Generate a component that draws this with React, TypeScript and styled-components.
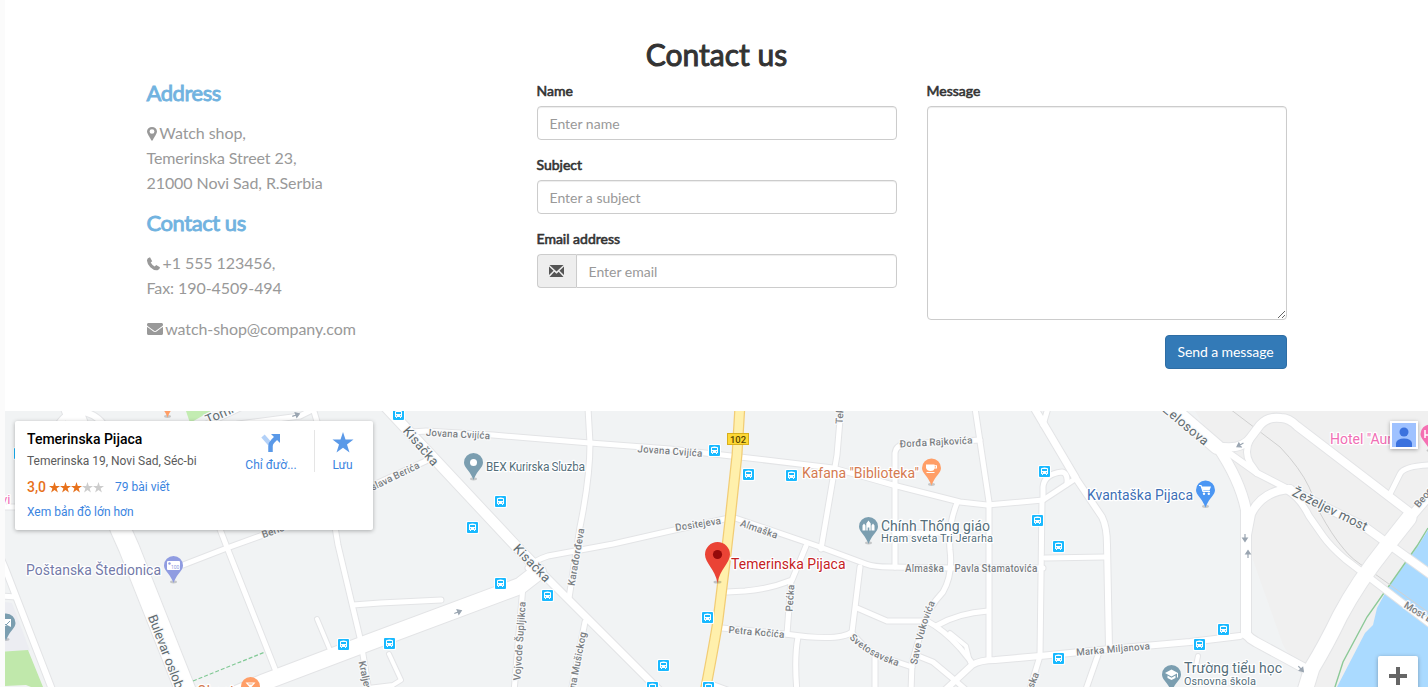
import React from "react";
import styled, { createGlobalStyle } from "styled-components";
import { FaEnvelope } from "react-icons/fa";

const GlobalStyle = createGlobalStyle`
  * { box-sizing: border-box; }
  html, body { margin: 0; padding: 0; }
  body {
    background: #fbfbfb;
    font-family: Lato, "Open Sans", sans-serif;
    font-size: 14px;
    line-height: 20px;
    color: #333;
    overflow: hidden;
  }
`;

const Page = styled.div`
  height: 687px;
  margin-left: 5px;
  background: #fff;
  display: flex;
  flex-direction: column;
  overflow: hidden;
`;

const ContactSection = styled.section`
  height: 411px;
  flex: none;
  padding-top: 38px;
`;

const Container = styled.div`
  width: 1170px;
  margin: 0 auto;
`;

const Title = styled.h2`
  margin: 0 0 10px;
  font-size: 30px;
  line-height: 33px;
  font-weight: 400;
  text-align: center;
  -webkit-text-stroke: 1px #333;
`;

const Columns = styled.div`
  display: grid;
  grid-template-columns: repeat(3, 1fr);
`;

const Column = styled.div`
  padding: 0 15px;
`;

const InfoHeading = styled.h3`
  margin: 0 0 15px;
  font-size: 22px;
  line-height: 24px;
  font-weight: 400;
  letter-spacing: -0.45px;
  color: #71b3e0;
  -webkit-text-stroke: 0.9px #71b3e0;
`;

const InfoText = styled.p<{ $gap?: number }>`
  margin: 0 0 ${(p) => p.$gap ?? 16}px;
  font-size: 16px;
  line-height: 25px;
  letter-spacing: -0.08px;
  color: #999;
  svg { vertical-align: -2px; margin-right: -1px; }
`;

const FormGroup = styled.div`
  display: flex;
  flex-direction: column;
  margin-bottom: 15px;
`;

const Label = styled.label`
  margin-bottom: 5px;
  line-height: 20px;
  -webkit-text-stroke: 0.6px #333;
`;

const Input = styled.input<{ $joined?: boolean }>`
  flex: 1 1 34px;
  min-width: 0;
  height: 34px;
  padding: 6px 12px;
  font: inherit;
  border: 1px solid #ccc;
  border-radius: ${(p) => (p.$joined ? "0 4px 4px 0" : "4px")};
  box-shadow: inset 0 1px 1px rgba(0, 0, 0, 0.075);
  background: #fff;
  outline: none;
  &::placeholder { color: #999; opacity: 1; }
`;

const TextArea = styled.textarea`
  height: 214px;
  padding: 6px 12px;
  font: inherit;
  border: 1px solid #ccc;
  border-radius: 4px;
  box-shadow: inset 0 1px 1px rgba(0, 0, 0, 0.075);
  outline: none;
  resize: vertical;
`;

const InputGroup = styled.div`
  display: flex;
`;

const Addon = styled.span`
  width: 39px;
  height: 34px;
  display: flex;
  align-items: center;
  justify-content: center;
  background: #eee;
  border: 1px solid #ccc;
  border-right: 0;
  border-radius: 4px 0 0 4px;
`;

const ButtonRow = styled.div`
  display: flex;
  justify-content: flex-end;
`;

const SendButton = styled.button`
  width: 122px;
  height: 34px;
  padding: 0;
  font: inherit;
  letter-spacing: -0.08px;
  color: #fff;
  background: #337ab7;
  border: 1px solid #2e6da4;
  border-radius: 4px;
`;

const MapArea = styled.div`
  position: relative;
  height: 276px;
  overflow: hidden;
  font-family: Roboto, sans-serif;
`;

const MapCanvas = styled.svg`
  display: block;
  width: 1423px;
  height: 276px;
  font-family: Roboto, sans-serif;
`;

const PlaceCard = styled.div`
  position: absolute;
  left: 10px;
  top: 10px;
  width: 358px;
  height: 109px;
  padding: 9px 0 0 12px;
  display: flex;
  background: #fff;
  border-radius: 2px;
  box-shadow: 0 1px 4px rgba(0, 0, 0, 0.3);
`;

const PlaceInfo = styled.div`
  width: 207px;
`;

const PlaceName = styled.div`
  font-size: 14px;
  font-weight: 500;
  line-height: 18px;
  color: #000;
`;

const PlaceAddress = styled.div`
  margin-top: 5px;
  font-size: 12px;
  line-height: 16px;
  color: #5b5b5b;
`;

const Rating = styled.div`
  margin-top: 9px;
  height: 18px;
  display: flex;
  align-items: center;
`;

const Score = styled.span`
  font-size: 14px;
  font-weight: 500;
  color: #e7711b;
  margin-right: 3px;
`;

const Stars = styled.span`
  display: flex;
  margin-right: 11px;
`;

const Link = styled.a`
  font-size: 12px;
  line-height: 16px;
  color: #3a84df;
`;

const LinkRow = styled.div`
  margin-top: 8px;
  height: 16px;
  display: flex;
`;

const CardAction = styled.div<{ $width: number }>`
  width: ${(p) => p.$width}px;
  height: 43px;
  padding-top: 2px;
  display: flex;
  flex-direction: column;
  align-items: center;
  gap: 3px;
`;

const CardDivider = styled.div`
  width: 1px;
  height: 42px;
  margin-left: 6px;
  background: #e5e5e5;
`;

const AccountButton = styled.div`
  position: absolute;
  left: 1385px;
  top: 10px;
  width: 28px;
  height: 28px;
  padding: 2px;
  background: #fff;
  box-shadow: 0 1px 4px rgba(0, 0, 0, 0.3);
  svg { display: block; }
`;

const ZoomButton = styled.div`
  position: absolute;
  left: 1373px;
  top: 245px;
  width: 40px;
  height: 40px;
  background: #fff;
  border-radius: 2px;
  box-shadow: 0 1px 4px rgba(0, 0, 0, 0.3);
  display: flex;
  align-items: center;
  justify-content: center;
`;

/* ---- map data ---- */

const ROADS: [number, string][] = [
  [20, "M70 405L121 530L129 548L187 694"],
  [6, "M58 425Q68 410 80 412Q94 412 104 425"],
  [6, "M-2 552L5 568L53 692"],
  [5, "M2 596L16 597"],
  [5, "M2 507L20 507"],
  [5, "M183 565L227 548L285 527L365 489L428 460"],
  [5, "M218 524L228 550L277 674"],
  [5, "M313 408L318 425L338 545L361 642L369 692"],
  [5, "M353 605L380 603L441 600"],
  [4, "M317 619L330 650"],
  [4, "M389 654L401 680L393 685L368 688"],
  [5, "M238 424L300 416L314 409"],
  [5, "M198 428L240 408"],
  [16, "M236 694L262 683L370 642L520 586L538 572"],
  [5, "M528 568Q535 560 548 556L613 544L670 531L729 518"],
  [10, "M384 405L515 545L540 571"],
  [7, "M538 569L662 693"],
  [5, "M412 432L426 431L493 435L590 443L670 449L740 457L833 468L893 485L960 502L987 505L1043 500L1075 479"],
  [5, "M588 408L590 443Q590 478 580 527L569 598"],
  [5, "M585 622L571 692"],
  [5, "M523 586L514 692"],
  [5, "M841 408L837 455L821 549"],
  [5, "M735 518L820 547L866 564Q874 567 890 567L950 568L1043 568"],
  [5, "M806 546L792 580Q770 589 745 591L727 592"],
  [5, "M791 581L787 634"],
  [5, "M722 628L785 634Q840 642 852 632L860 567"],
  [5, "M852 633Q866 650 876 655L912 667"],
  [5, "M798 637Q794 658 797 692"],
  [5, "M875 656L875 692"],
  [5, "M857 608L887 621L927 621Q944 630 960 648L973 664"],
  [5, "M936 626Q958 613 988 611"],
  [5, "M957 503Q948 525 950 550Q953 575 943 592Q928 608 923 625L912 663L911 692"],
  [5, "M918 656L933 662L957 682L966 690"],
  [4, "M950 633L966 646L970 662"],
  [6, "M943 692L972 665Q980 660 995 660L1040 656L1110 649L1190 642L1240 636"],
  [5, "M975 408L989 502L989 660"],
  [5, "M1042 500L1040 656L1029 692"],
  [5, "M1043 500L1043 487Q1044 474 1062 472Q1068 473 1067 484"],
  [7, "M1033 406L1075 477"],
  [6, "M1073 474L1102 517Q1107 527 1107 545L1109 648"],
  [5, "M1048 408L1043 425"],
  [5, "M1045 558L1105 557"],
  [5, "M1099 652L1085 692"],
  [5, "M895 567L895 453Q896 445 906 444L980 440"],
  [5, "M895 533L950 533"],
  [4, "M710 683L734 692"],
  [14, "M1160 398L1217 447"],
  [10, "M1217 446Q1240 480 1246 510L1246 634"],
  [6, "M1222 448L1257 473L1290 490"],
  [8, "M1289 489L1365 527L1434 577"],
  [8, "M1217 446Q1242 451 1251 437L1260 425Q1268 416 1281 418Q1289 418 1297 426L1412 514"],
  [6, "M1250 440Q1244 452 1250 463L1257 473"],
  [8, "M1290 489Q1262 491 1251 514L1247 535"],
  [6, "M1288 491Q1300 498 1309 516L1323 536Q1330 546 1345 559L1434 627"],
  [5, "M1390 494L1400 474Q1404 466 1430 465"],
  [9, "M1432 492L1409 519"],
  [15, "M1409 518L1386 547Q1358 582 1340 616Q1326 645 1312 668L1304 694"],
  [9, "M1246 634Q1250 639 1256 642L1304 668"],
  [4, "M1198 656L1195 670"],
];

const YELLOW = "M740 405L737 455L730 520L726 555L718 620Q715 640 705 692";

const BUS_STOPS: [number, number][] = [
  [398, 414], [500, 501], [472, 527], [500, 583], [547, 595], [389, 643], [343, 644],
  [663, 665], [652, 687], [714, 450], [748, 474], [791, 475], [707, 617], [708, 687],
  [1044, 471], [1037, 520], [1058, 546], [1058, 658], [1223, 629], [1199, 644], [19, 453],
];

type StreetLabel = { t: string; x: number; y: number; r?: number; len?: number; size?: number; start?: boolean };

const STREETS: StreetLabel[] = [
  { t: "Jovana Cvijića", x: 458, y: 434, r: 3, len: 64 },
  { t: "Jovana Cvijića", x: 670, y: 451, r: 4, len: 65 },
  { t: "Kisačka", x: 421, y: 446, r: 49, len: 47, size: 13 },
  { t: "Kisačka", x: 532, y: 563, r: 46, len: 47, size: 13 },
  { t: "slava Berića", x: 395, y: 476, r: -26, len: 53 },
  { t: "Karađorđeva", x: 576, y: 557, r: -80, len: 58 },
  { t: "Vojvode Šupljikca", x: 519.5, y: 641, r: -86, len: 79 },
  { t: "na Mušickog", x: 577.5, y: 660, r: -79, len: 57 },
  { t: "Dositejeva", x: 698, y: 524, r: -9, len: 46 },
  { t: "Almaška", x: 759, y: 529, r: 19, len: 39 },
  { t: "Pećka", x: 790, y: 598, r: -86, len: 27 },
  { t: "Petra Kočića", x: 756.5, y: 632, r: 5, len: 56 },
  { t: "Almaška", x: 924.5, y: 568, len: 39 },
  { t: "Pavla Stamatovića", x: 996, y: 568, len: 83 },
  { t: "Marka Miljanova", x: 1113, y: 649, r: -5, len: 74 },
  { t: "Kraljev", x: 362, y: 661, r: 78, start: true },
  { t: "Bulevar oslob", x: 152, y: 615, r: 69, size: 13, start: true },
  { t: "ska", x: 1033, y: 680, r: -68 },
  { t: "Zelosova", x: 1186, y: 425, r: 40, len: 55, size: 13 },
  { t: "Žeželjev most", x: 1330, y: 509, r: 26, len: 82, size: 13 },
  { t: "Most B", x: 1405, y: 604, r: 31, start: true },
  { t: "Beog", x: 1416, y: 506, r: -50, start: true },
  { t: "Đorđa Rajkovića", x: 936, y: 442, r: -3, len: 73 },
  { t: "Tek", x: 839, y: 424, r: -86, start: true },
  { t: "Tomi", x: 206, y: 420, r: -24, size: 13, start: true },
  { t: "Berića", x: 262, y: 535, r: -20, start: true },
];

type PlaceLabel = { t: string; x: number; y: number; len?: number; size?: number; c: string };

const PLACES: PlaceLabel[] = [
  { t: "BEX Kurirska Sluzba", x: 486, y: 471, len: 99, size: 12, c: "#546e7a" },
  { t: "Kafana \"Biblioteka\"", x: 802, y: 478, len: 117, c: "#d47a50" },
  { t: "Chính Thống giáo", x: 881, y: 531, len: 109, c: "#546e7a" },
  { t: "Hram sveta Tri Jerarha", x: 881, y: 541.5, len: 112, size: 11, c: "#546e7a" },
  { t: "Kvantaška Pijaca", x: 1087, y: 500, len: 106, c: "#3d6fb6" },
  { t: "Temerinska Pijaca", x: 731, y: 569, len: 114.5, c: "#c5221f" },
  { t: "Poštanska Štedionica", x: 26, y: 575, len: 135, c: "#737aa9" },
  { t: "Trường tiểu học", x: 1184, y: 673, len: 98, c: "#546e7a" },
  { t: "Osnovna škola", x: 1184, y: 684.5, len: 72, size: 11, c: "#546e7a" },
  { t: "Hotel \"Aurora", x: 1330, y: 444, c: "#f06eb4" },
  { t: "Obostol", x: 197, y: 696, c: "#d47a50" },
  { t: "vi", x: 1, y: 504, size: 13, c: "#f06eb4" },
];

function Pin({ x, y, color, children }: { x: number; y: number; color: string; children?: React.ReactNode }) {
  return (
    <g transform={`translate(${x} ${y})`}>
      <ellipse cx="0" cy="16.5" rx="3.5" ry="1.4" fill="#000" opacity=".18" />
      <path d="M0-9.5A9.5 9.5 0 0 1 9.5 0C9.5 5 4 8 .8 15.5L0 17.5L-.8 15.5C-4 8-9.5 5-9.5 0A9.5 9.5 0 0 1 0-9.5Z" fill={color} />
      {children}
    </g>
  );
}

function BusStop({ x, y }: { x: number; y: number }) {
  return (
    <g transform={`translate(${x + 0.5} ${y + 0.5})`}>
      <rect x="-6.5" y="-6.5" width="13" height="13" rx="1.5" fill="#fff" />
      <rect x="-5.5" y="-5.5" width="11" height="11" rx="1" fill="#19b9ff" />
      <path d="M-3.500-2.500Q-3.500-4 0-4T3.500-2.500V2.500H2.500V3.500H1.500V2.500H-1.500V3.500H-2.500V2.500H-3.500Z" fill="#fff" />
      <rect x="-2.500" y="-2.500" width="5" height="2" fill="#19b9ff" />
      <path d="M-2.500.7h1v1h-1zM1.500.7h1v1h-1z" fill="#19b9ff" />
    </g>
  );
}

function Arrow({ x, y, r }: { x: number; y: number; r: number }) {
  return (
    <path
      transform={`translate(${x} ${y}) rotate(${r})`}
      d="M-4 0H1M0-2.300L3.500 0L0 2.300Z"
      fill="#9aa5b1"
      stroke="#9aa5b1"
      strokeWidth="1.2"
    />
  );
}

function StreetMap() {
  return (
    <MapCanvas viewBox="5 411 1423 276">
      <rect x="5" y="411" width="1423" height="276" fill="#f1f3f4" />
      <path d="M1195 411H1428V687H1310L1283 645L1253 560L1246 510L1217 447Z" fill="#f0f0f0" />
      <path d="M186 411H211L190 423Z" fill="#c3ecb2" />
      <path d="M5 602L12 603L30 651H5Z" fill="#ecedf2" />
      <path d="M5 651.500L28 650L43 687H31L26 685L5 686Z" fill="#c0e8ab" />
      <path d="M1428 530L1418 546L1388 588L1377 608L1373 625L1365 633L1337 687H1428Z" fill="#aadaff" />
      <path d="M1428 528L1417 546L1367 617L1343 662L1334 690" fill="none" stroke="#8cc997" strokeWidth="1.4" />
      <path d="M1230 409L1280 447Q1300 468 1309 487L1320 513Q1332 535 1343 548Q1352 560 1368 569L1432 615" fill="none" stroke="#d0d0d0" strokeWidth="1" />
      <g fill="none" strokeLinejoin="round" strokeLinecap="round">
        {ROADS.map(([w, d], i) => (
          <path key={i} d={d} stroke="#e3e4e6" strokeWidth={w + 2} />
        ))}
        {ROADS.map(([w, d], i) => (
          <path key={i} d={d} stroke="#fff" strokeWidth={w} />
        ))}
        <path d={YELLOW} stroke="#f2cd75" strokeWidth="11" />
        <path d={YELLOW} stroke="#fff0ac" strokeWidth="8.500" />
      </g>
      <path d="M193 681L265 652" stroke="#81c995" strokeWidth="1.200" strokeDasharray="4 2" />
      <Arrow x={296} y={415} r={-20} />
      <Arrow x={458} y={612} r={-22} />
      <Arrow x={1240} y={445} r={150} />
      <Arrow x={1245} y={538} r={90} />
      <Arrow x={1248} y={554} r={-90} />
      <Arrow x={1301} y={669} r={48} />
      {BUS_STOPS.map(([x, y]) => (
        <BusStop key={`${x}-${y}`} x={x} y={y} />
      ))}
      <rect x="727.500" y="433.500" width="21" height="11" fill="#fdd835" stroke="#d8ae1c" />
      <text x="738" y="442.500" fontSize="9.500" fontWeight="500" textAnchor="middle" fill="#5a4700">102</text>
      <g fill="#7a7e82" stroke="#f8f9fa" strokeWidth="2.500" paintOrder="stroke" strokeLinejoin="round">
        {STREETS.map((s, i) => (
          <text
            key={i}
            transform={`translate(${s.x} ${s.y}) rotate(${s.r ?? 0})`}
            dy=".35em"
            fontSize={s.size ?? 10}
            fontWeight={s.size ? 400 : 500}
            fill={s.size ? "#5f6b70" : undefined}
            textLength={s.len}
            textAnchor={s.start ? "start" : "middle"}
          >
            {s.t}
          </text>
        ))}
        <path id="svetosavska" d="M849 638Q867 657 903 668" fill="none" stroke="none" />
        <text fontSize="10" fontWeight="500">
          <textPath href="#svetosavska" textLength="57">Svetosavska</textPath>
        </text>
        <path id="vukovica" d="M917 665Q924 627 936 601" fill="none" stroke="none" />
        <text fontSize="10" fontWeight="500">
          <textPath href="#vukovica" textLength="65">Save Vukovića</textPath>
        </text>
      </g>
      <g stroke="#fff" strokeWidth="2.500" paintOrder="stroke" strokeLinejoin="round">
        {PLACES.map((p) => (
          <text key={p.t} x={p.x} y={p.y} fontSize={p.size ?? 14} fill={p.c} textLength={p.len}>
            {p.t}
          </text>
        ))}
      </g>
      <Pin x={473.5} y={462.5} color="#7b9eb0"><circle r="3.500" fill="#fff" /></Pin>
      <Pin x={931.5} y={468} color="#ff9e67">
        <path d="M-5.500-3.500H3V-2.800H5.500V.5H3Q2.500 3-1 3T-5.500 0ZM3.200-1.700V-.5H4.400V-1.700ZM-5 4H3V5H-5Z" fill="#fff" fillRule="evenodd" />
      </Pin>
      <Pin x={868.5} y={526.5} color="#7b9eb0">
        <path d="M-6 4V-1L-4.500-3L-3 -1V4ZM-2.200 4V-3L0-6L2.200-3V4H.8V1H-.8V4ZM3 4V-1L4.500-3L6-1V4Z" fill="#fff" />
      </Pin>
      <Pin x={1205.5} y={490} color="#4b96f3">
        <path d="M-6.500-4.500H-4.500L-2.500 1.500H4.500" fill="none" stroke="#fff" strokeWidth="1.200" />
        <path d="M-4-3.500H5.500L4 .5H-2.700Z" fill="#fff" />
        <circle cx="-1.500" cy="3.800" r="1.200" fill="#fff" />
        <circle cx="3.300" cy="3.800" r="1.200" fill="#fff" />
      </Pin>
      <Pin x={173.5} y={565.5} color="#909ce1">
        <rect x="-6.500" y="-4.500" width="13" height="9" rx="1" fill="#fff" />
        <circle cx="-4" cy="-2" r="1.200" fill="#909ce1" />
        <text x="-2.500" y="3" fontSize="5" fill="#909ce1">100</text>
      </Pin>
      <Pin x={6} y={623} color="#7b9eb0">
        <path d="M-6-1L-3-4L5-4V4L1 2L-4 5V0Z" fill="#fff" />
        <path d="M-4-1L0 2L4-2" fill="none" stroke="#7b9eb0" />
      </Pin>
      <Pin x={1171.5} y={674.5} color="#7b9eb0">
        <path d="M-6.500-1.500L0-5L6.500-1.500V3H5.500V-.9L0 2ZM-4 1L0 3.200L4 1V3.500L0 5.500L-4 3.500Z" fill="#fff" />
      </Pin>
      <Pin x={250.5} y={686.5} color="#ff9e67">
        <path d="M-5-4H5L.6 1V5H-.6V1ZM-2.500-3L-1.500-2H1.500L2.500-3Z" fill="#fff" fillRule="evenodd" />
      </Pin>
      <Pin x={167.5} y={400} color="#ff9e67" />
      <Pin x={1430} y={434} color="#f571b3"><path d="M-5-4V4M-5 1H5M-2-1H4" stroke="#fff" strokeWidth="1.500" /></Pin>
      <ellipse cx="717.500" cy="582" rx="4" ry="1.500" fill="#000" opacity=".2" />
      <path d="M717.500 542A12.500 12.500 0 0 1 730 554.500C730 563 720 569 717.500 583C715 569 705 563 705 554.500A12.500 12.500 0 0 1 717.500 542Z" fill="#ea4335" />
      <circle cx="717.500" cy="554.500" r="4.600" fill="#960a0a" />
    </MapCanvas>
  );
}

function DirectionsIcon() {
  return (
    <svg width="22" height="22" viewBox="0 0 22 22">
      <path d="M3 4L10 12" stroke="#b3d1f8" strokeWidth="4.500" />
      <path d="M10.500 20V14Q10.500 11.500 13 9L16 6" fill="none" stroke="#5a99e8" strokeWidth="4.500" />
      <path d="M11 2H20V11Z" fill="#5a99e8" />
    </svg>
  );
}

export default function App() {
  return (
    <>
      <GlobalStyle />
      <Page>
        <ContactSection>
          <Container>
            <Title>Contact us</Title>
            <Columns>
              <Column>
                <InfoHeading>Address</InfoHeading>
                <InfoText>
                  <svg width="10" height="14" viewBox="0 0 9 14" preserveAspectRatio="none">
                    <path fillRule="evenodd" d="M4.500 0A4.500 4.500 0 0 1 9 4.500C9 6.500 6.500 10 5.300 13Q4.500 14.600 3.700 13C2.500 10 0 6.500 0 4.500A4.500 4.500 0 0 1 4.500 0ZM4.500 2.300A2.200 2.200 0 1 0 4.500 6.700A2.200 2.200 0 1 0 4.500 2.300Z" fill="#999" />
                  </svg>{" "}
                  Watch shop,
                  <br />
                  Temerinska Street 23,
                  <br />
                  21000 Novi Sad, R.Serbia
                </InfoText>
                <InfoHeading>Contact us</InfoHeading>
                <InfoText>
                  <svg width="13" height="14" viewBox="0 0 13 14">
                    <path d="M0 3Q.2.900 3 .3L5.200 4.200L3.700 5.600Q5.100 8.300 7.700 9.500L9.200 8L13 10.200Q12.800 12.700 10.500 13.300Q7 13.800 3.300 10.200Q-.2 6.500 0 3Z" fill="#999" />
                  </svg>{" "}
                  +1 555 123456,
                  <br />
                  Fax: 190-4509-494
                </InfoText>
                <InfoText>
                  <FaEnvelope size={16} /> watch-shop@company.com
                </InfoText>
              </Column>
              <Column>
                <FormGroup>
                  <Label>Name</Label>
                  <Input placeholder="Enter name" />
                </FormGroup>
                <FormGroup>
                  <Label>Subject</Label>
                  <Input placeholder="Enter a subject" />
                </FormGroup>
                <FormGroup>
                  <Label>Email address</Label>
                  <InputGroup>
                    <Addon>
                      <svg width="15" height="12" viewBox="0 0 15 12">
                        <path d="M.5 0H14.500L7.500 6.500ZM0 1.500L4.500 5.800L0 10ZM15 1.500V10L10.500 5.800ZM.5 12L5.300 6.700L7.500 8.700L9.700 6.700L14.500 12Z" fill="#555" />
                      </svg>
                    </Addon>
                    <Input $joined placeholder="Enter email" />
                  </InputGroup>
                </FormGroup>
              </Column>
              <Column>
                <FormGroup>
                  <Label>Message</Label>
                  <TextArea />
                </FormGroup>
                <ButtonRow>
                  <SendButton>Send a message</SendButton>
                </ButtonRow>
              </Column>
            </Columns>
          </Container>
        </ContactSection>
        <MapArea>
          <StreetMap />
          <PlaceCard>
            <PlaceInfo>
              <PlaceName>Temerinska Pijaca</PlaceName>
              <PlaceAddress>Temerinska 19, Novi Sad, Séc-bi</PlaceAddress>
              <Rating>
                <Score>3,0</Score>
                <Stars>
                  {[0, 1, 2, 3, 4].map((i) => (
                    <svg key={i} width="11" height="11" viewBox="0 0 22 22">
                      <path d="M11 0L13.600 8H22L15.200 13L17.800 21L11 16L4.200 21L6.800 13L0 8H8.400Z" fill={i < 3 ? "#e7711b" : "#ccc"} />
                    </svg>
                  ))}
                </Stars>
                <Link>79 bài viết</Link>
              </Rating>
              <LinkRow>
                <Link>Xem bản đồ lớn hơn</Link>
              </LinkRow>
            </PlaceInfo>
            <CardAction $width={74}>
              <DirectionsIcon />
              <Link>Chỉ đườ...</Link>
            </CardAction>
            <CardDivider />
            <CardAction $width={55}>
              <svg width="22" height="22" viewBox="0 0 22 22">
                <path d="M11 0L13.500 7.500H21.500L15 12.500L17.500 20.500L11 15.800L4.500 20.500L7 12.500L.5 7.500H8.500Z" fill="#5a99e8" />
              </svg>
              <Link>Lưu</Link>
            </CardAction>
          </PlaceCard>
          <AccountButton>
            <svg width="24" height="24" viewBox="0 0 24 24">
              <rect width="24" height="24" fill="#9fc2ff" />
              <circle cx="12" cy="9" r="4.500" fill="#3b72de" />
              <path d="M4 24V20Q5 15.500 12 15.500T20 20V24Z" fill="#3b72de" />
            </svg>
          </AccountButton>
          <ZoomButton>
            <svg width="18" height="18" viewBox="0 0 18 18">
              <path d="M9 0V18M0 9H18" stroke="#666" strokeWidth="4" />
            </svg>
          </ZoomButton>
        </MapArea>
      </Page>
    </>
  );
}
